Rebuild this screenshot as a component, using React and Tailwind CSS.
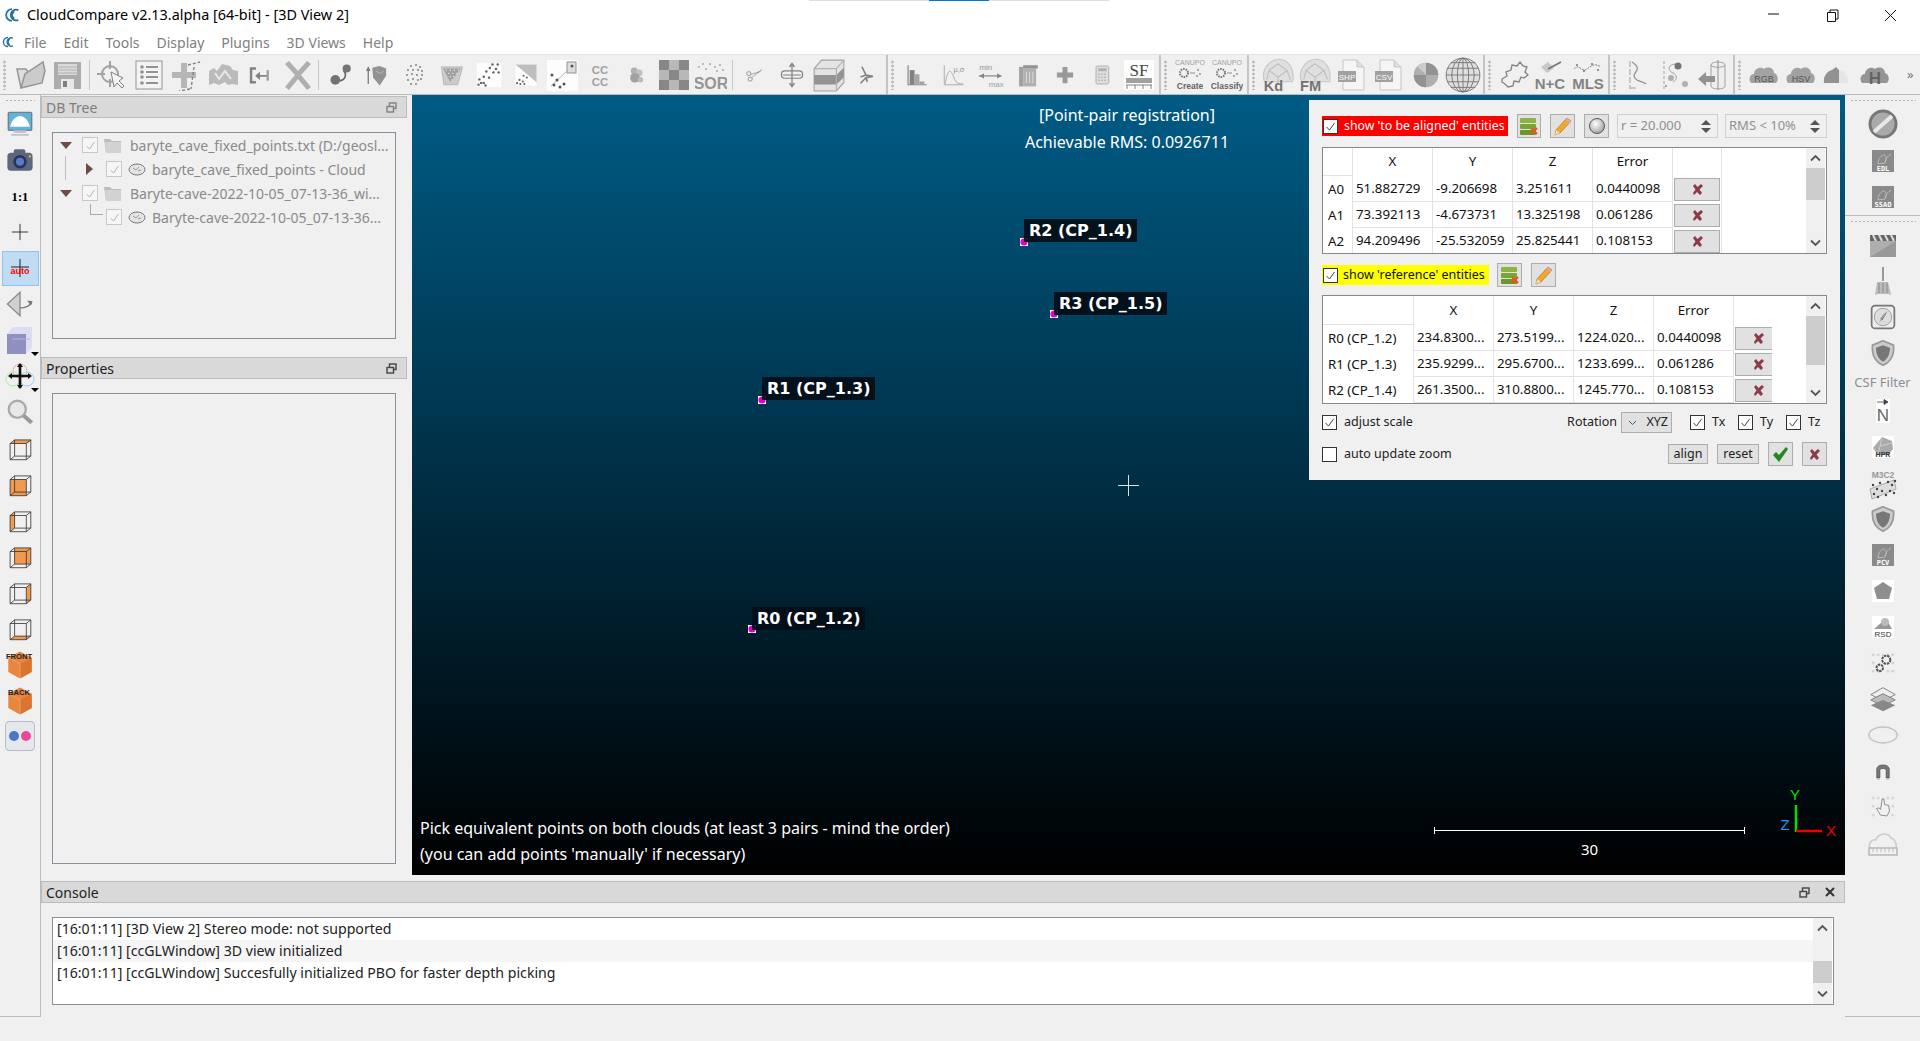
import React from 'react'

// small helpers for the icon drawings
const G = ({ children, s = 32, className = '' }) => (
  <svg width={s} height={s} viewBox="0 0 32 32" className={className}>{children}</svg>
)
const Dots = ({ pts, r = 1.2, fill = '#666' }) => pts.map((p, i) => <circle key={i} cx={p[0]} cy={p[1]} r={r} fill={fill} />)
const T = ({ x, y, size, fill = '#666', bold = false, family = 'Liberation Sans', children }) => (
  <text x={x} y={y} fontSize={size} fill={fill} fontFamily={family} fontWeight={bold ? 700 : 400} textAnchor="middle">{children}</text>
)
const Cloud = ({ fill = '#a0a0a0' }) => (
  <path d="M3 24c-3-4-1-9 3-9 0-5 6-8 10-5 4-3 10-1 10 4 4 1 5 7 2 10z" fill={fill} />
)

const CcLogo = ({ s }) => (
  <svg width={s} height={s} viewBox="0 0 20 20" fill="none" stroke="#24709f" strokeWidth="2">
    <path d="M10 3.500a6.500 6.500 0 1 0 0 13" />
    <path d="M17 4.500a6 6 0 1 0 0 11" />
    <path d="M12.500 6a4.500 4.500 0 0 0 0 8" />
  </svg>
)

const topGroup1 = [
  <G key="open"><path d="M6 29 2 10h9l2 3h11v3" fill="#dcdcdc" stroke="#8c8c8c" strokeWidth="1.5" /><path d="M6 29 10 15 28 3l2 9-3 12z" fill="#c8c8c8" stroke="#8c8c8c" strokeWidth="1.5" /></G>,
  <G key="save"><rect x="2" y="3" width="27" height="27" fill="#a5a5a5" /><rect x="6" y="5" width="19" height="11" fill="#d8d8d8" /><path d="M6 8h19M6 11h19M6 14h19" stroke="#aaa" /><rect x="9" y="20" width="13" height="10" fill="#e8e8e8" /><rect x="11" y="22" width="4" height="6" fill="#777" /></G>,
]
const topGroup2 = [
  <G key="pick"><circle cx="14" cy="15" r="8" fill="none" stroke="#9a9a9a" strokeWidth="2" /><path d="M14 2v8M14 20v8M1 15h8" stroke="#9a9a9a" strokeWidth="2" /><path d="m15 13 3 15 3-4 5 5 2-2-5-5 4-3z" fill="#f4f4f4" stroke="#777" /></G>,
  <G key="list"><rect x="3" y="2" width="26" height="28" fill="#f4f4f4" stroke="#8c8c8c" /><Dots pts={[[9, 8], [9, 13], [9, 18], [9, 24]]} r="1.8" fill="#888" /><path d="M13 8h12M13 13h12M13 18h12M13 24h12" stroke="#888" strokeWidth="2" /></G>,
  <G key="crop"><path d="M11 4h6v9h9v6h-9v10h-6V19H2v-6h9z" fill="#b0b0b0" /><path d="M18 6l12-3M24 8l-3 22M20 30l-11 2" fill="none" stroke="#777" strokeWidth="1.4" strokeDasharray="3 2" /></G>,
  <G key="sheep"><path d="M2 26V12l5-3 3 3 5-7 8 2 3 4 5 1v14l-6-1-4 1-3-3-6 3-5-2z" fill="#b5b5b5" /><path d="M8 14l4 6 6-8 6 8" stroke="#e6e6e6" strokeWidth="2" fill="none" /></G>,
  <G key="arrowin" s={26}><path d="M11 8H5v17h6" fill="none" stroke="#777" strokeWidth="3" /><path d="M11 16h5v-4l-6 5 6 5v-4h9v-2z" fill="#777" /><rect x="24" y="10" width="3" height="13" fill="#999" /></G>,
  <G key="x"><path d="m4 5 4-3 9 10 9-10 4 3-10 11 10 12-4 3-9-11-9 11-4-3 10-12z" fill="#a9a9a9" /></G>,
]
const topGroup3 = [
  <G key="s" s={26}><path d="M19 10c5 6 2 14-8 13" fill="none" stroke="#555" strokeWidth="2" /><circle cx="23" cy="8" r="5" fill="#666" /><circle cx="9" cy="22" r="6" fill="#666" /></G>,
  <G key="shield" s={26}><path d="M4 27V8M2 11l2-4 2 4" stroke="#666" fill="none" strokeWidth="1.5" /><path d="M9 7l9-2 8 3v9l-8 12-8-10z" fill="#888" /><path d="M13 11l6 3 4-3" stroke="#bbb" fill="none" /></G>,
  <G key="dotcircle"><Dots pts={[[12, 7], [17, 6], [21, 8], [9, 11], [14, 11], [19, 11], [23, 12], [8, 16], [13, 15], [18, 16], [23, 16], [9, 21], [14, 20], [19, 21], [22, 20], [12, 25], [17, 25]]} r="1" fill="#777" /></G>,
  <G key="tex" s={26}><path d="M3 6h26l-6 22H6z" fill="#c8c8c8" stroke="#aaa" /><path d="M5 8h22L14 25z" fill="#999" /><Dots pts={[[9, 10], [14, 10], [19, 10], [24, 10], [12, 14], [17, 14], [22, 14], [14, 18], [18, 18], [16, 22]]} r=".8" fill="#eee" /></G>,
  <G key="d1" s={28}><rect x="2" y="2" width="28" height="28" fill="#fff" /><Dots pts={[[20, 4], [26, 4], [17, 8], [24, 9], [13, 12], [21, 13], [27, 13], [10, 18], [5, 21], [16, 19], [4, 27], [10, 25], [12, 28], [7, 25]]} r="1.4" fill="#555" /></G>,
  <G key="d2" s={26}><rect x="3" y="3" width="26" height="26" fill="#fff" /><path d="M3 3h26v22z" fill="#b9b9b9" /><Dots pts={[[13, 17], [17, 19], [8, 22], [12, 24], [5, 26], [9, 27], [14, 27]]} r="1.3" fill="#555" /></G>,
  <G key="d3"><rect x="0" y="1" width="31" height="31" fill="#fff" /><rect x="20" y="3" width="9" height="11" fill="#ddd" stroke="#888" /><path d="M4 27 20 12" stroke="#aaa" /><Dots pts={[[5, 16], [10, 21], [7, 26], [13, 28], [17, 25], [25, 7]]} r="1.5" fill="#444" /></G>,
  <G key="cc" s={28}><T x="16" y="15" size="13" bold fill="#999">CC</T><T x="16" y="28" size="13" bold fill="#999">CC</T></G>,
  <G key="fig" s={22}><circle cx="12" cy="10" r="5" fill="#aaa" /><circle cx="19" cy="13" r="5" fill="#bbb" /><circle cx="13" cy="20" r="7" fill="#999" /><circle cx="21" cy="23" r="4" fill="#b5b5b5" /></G>,
  <svg key="check" width="30" height="30" viewBox="0 0 30 30">
    {[0, 1, 2].map((r) => [0, 1, 2].map((c) => (
      <rect key={`${r}${c}`} x={c * 10} y={r * 10} width="10" height="10" fill={(r + c) % 2 ? '#b2b2b2' : '#7c7c7c'} />
    )))}
  </svg>,
  <G key="sor"><Dots pts={[[4, 8], [11, 10], [15, 5], [20, 8], [25, 6], [28, 11], [8, 5], [22, 12]]} r=".9" fill="#999" /><T x="16" y="30" size="16" bold fill="#8c8c8c">SOR</T></G>,
]
const topGroup4 = [
  <G key="sc" s={22}><circle cx="7" cy="14" r="3" fill="none" stroke="#666" /><circle cx="9" cy="22" r="3" fill="none" stroke="#666" /><path d="M10 15 24 11M11 20 26 8" stroke="#777" /></G>,
  <G key="move" s={26}><path d="M16 2v28M5 16h22" fill="none" stroke="#777" strokeWidth="1.500" /><path d="M13 6l3-4 3 4M13 26l3 4 3-4" fill="none" stroke="#777" strokeWidth="2" /><rect x="3" y="11" width="26" height="9" rx="4" fill="none" stroke="#777" strokeWidth="1.500" /></G>,
  <svg key="slab" width="34" height="34" viewBox="0 0 32 32"><path d="M2 10 9 2h21v21l-7 8H2z" fill="#e2e2e2" stroke="#999" /><path d="M2 16h21l7-7v9l-7 7H2z" fill="#8a8a8a" /><path d="M2 10h21v21M23 10l7-8" fill="none" stroke="#aaa" /></svg>,
  <G key="st" s={22}><path d="M10 4l6 12 10 2-10 2-8 8 8-8 2 6M16 16l-8 3" fill="none" stroke="#777" strokeWidth="2.4" /></G>,
]
const topGroup5 = [
  <G key="hist" s={26}><path d="M5 4v24h23" stroke="#777" fill="none" strokeWidth="1.4" /><rect x="7" y="10" width="6" height="18" fill="#777" /><rect x="13" y="15" width="6" height="13" fill="#a0a0a0" /><rect x="19" y="24" width="6" height="4" fill="#999" /></G>,
  <G key="mu" s={26}><path d="M4 4v24h24" stroke="#999" fill="none" /><path d="M5 27C9 6 12 8 17 22c2 4 5 5 10 5" stroke="#999" fill="none" /><T x="22" y="12" size="9" fill="#888">μ,σ</T></G>,
  <G key="mm" s={28}><T x="10" y="10" size="9" fill="#888">min</T><T x="22" y="30" size="9" fill="#999">max</T><path d="M2 17h26" stroke="#888" strokeWidth="1.6" /><path d="M3 17l5-3v6z" fill="#777" /><path d="M28 17l-5-3v6z" fill="#777" /></G>,
  <G key="trash" s={26}><rect x="5" y="6" width="5" height="24" fill="#999" /><rect x="10" y="8" width="16" height="22" fill="#aaa" /><rect x="10" y="4" width="18" height="4" fill="#888" /><path d="M14 12v14M18 12v14M22 12v14" stroke="#e2e2e2" /></G>,
  <G key="plus" s={26}><path d="M13 6h6v7h7v6h-7v7h-6v-7H6v-6h7z" fill="#8f8f8f" /></G>,
  <G key="calc" s={24}><rect x="8" y="4" width="17" height="24" rx="2" fill="#ddd" stroke="#999" /><rect x="11" y="7" width="11" height="4" fill="#aaa" /><Dots pts={[[12, 15], [16, 15], [20, 15], [12, 19], [16, 19], [20, 19], [12, 23], [16, 23], [20, 23]]} r="1" fill="#999" /></G>,
  <G key="sf"><rect x="1" y="1" width="30" height="30" fill="#fff" /><T x="16" y="17" size="17" family="Liberation Serif" fill="#333">SF</T><rect x="3" y="19" width="26" height="5" fill="#999" /><path d="M3 26h26M4 26v4M12 26v4M20 26v4M28 26v4" stroke="#777" /></G>,
]
const canupo = (label, key) => (
  <G key={key}><T x="16" y="6" size="7" fill="#999">CANUPO</T><circle cx="10" cy="14" r="4" fill="none" stroke="#666" strokeDasharray="1.5 1" strokeWidth="2" /><path d="M16 14h5" stroke="#888" /><Dots pts={[[24, 11], [26, 15], [23, 17]]} r="1" fill="#888" /><T x="16" y="30" size="8.500" fill="#555" bold>{label}</T></G>
)
const topGroup6 = [canupo('Create', 'c1'), canupo('Classify', 'c2')]
const brain = (label, key) => (
  <svg key={key} width="36" height="36" viewBox="0 0 32 32"><path d="M4 22C0 10 10 2 17 2c8 0 14 8 12 20z" fill="#dedede" stroke="#c4c4c4" /><path d="M8 12l8-6 8 6-8 6zM8 12l-2 8M24 12l3 8M16 18v6" stroke="#bbb" fill="none" /><T x="12" y="30" size="13" bold fill="#666">{label}</T></svg>
)
const doc = (label, key) => (
  <G key={key}><path d="M7 1h14l7 7v23H7z" fill="#f6f6f6" stroke="#c2c2c2" /><path d="M21 1v7h7" fill="#ddd" stroke="#c2c2c2" /><rect x="2" y="12" width="18" height="11" fill="#999" /><T x="11" y="21" size="8" fill="#fff">{label}</T></G>
)
const topGroup7 = [
  brain('Kd', 'kd'), brain('FM', 'fm'), doc('SHP', 'shp'), doc('CSV', 'csv'),
  <G key="pie" s={28}><circle cx="16" cy="16" r="14" fill="#a8a8a8" /><path d="M16 16V2a14 14 0 0 1 14 14zM16 16v14A14 14 0 0 1 2 16z" fill="#888" /><path d="M16 16 6 6a14 14 0 0 1 10-4z" fill="#c8c8c8" /></G>,
  <svg key="globe" width="36" height="36" viewBox="0 0 32 32" fill="none" stroke="#666" strokeWidth=".8"><circle cx="16" cy="16" r="15" fill="#ddd" /><ellipse cx="16" cy="16" rx="10" ry="15" /><ellipse cx="16" cy="16" rx="5" ry="15" /><path d="M16 1v30M2 10h28M1 16h30M2 22h28M5 5h22M5 27h22" /></svg>,
]
const topGroup8 = [
  <G key="puz"><path d="M4 20l5-3-1-4 5-2 1-5 5 1 3-4 3 4 4 1-2 5 3 3-4 3-3-1-2 5-5-1-1 5-5 1-3-3-3-2z" fill="none" stroke="#777" strokeWidth="1.3" /></G>,
  <G key="nc"><path d="M6 8l7-5 6 6-7 5z" fill="#c4c4c4" /><path d="M13 10 26 3" stroke="#666" strokeWidth="1.6" /><T x="15" y="30" size="15" bold fill="#777">N+C</T></G>,
  <G key="mls"><path d="M2 10c5-6 8 4 13 0s8-6 14-2" stroke="#777" fill="none" strokeDasharray="2 1" /><Dots pts={[[5, 6], [12, 12], [20, 5], [26, 11]]} r="1" /><T x="16" y="30" size="15" bold fill="#777">MLS</T></G>,
]
const topGroup9 = [
  <G key="sc1"><path d="M7 2v28" stroke="#999" strokeDasharray="6 2" /><path d="M9 3c14 9-5 11 5 18 3 2 8 2 9 4" stroke="#888" fill="none" strokeWidth="1.3" /><path d="M7 29h6" stroke="#999" /></G>,
  <G key="sc2"><path d="M4 2v28" stroke="#999" strokeDasharray="3 2" /><path d="M15 5c-8 1-7 7-2 9 4 2 5 6 0 9" stroke="#999" fill="none" /><circle cx="18" cy="7" r="3.500" fill="#666" /><circle cx="11" cy="19" r="3" fill="#aaa" /><circle cx="25" cy="25" r="3" fill="#aaa" /><circle cx="6" cy="27" r="1" fill="#888" /></G>,
  <G key="cyl"><path d="M14 6v21c0 4 14 4 14 0V6c0-4-14-4-14 0zM14 6c0 3 14 3 14 0" fill="#eee" stroke="#999" /><path d="M21 1v30" stroke="#888" /><path d="M1 20l8-7v4h9v6H9v4z" fill="#888" /></G>,
]
const colorCloud = (label, key) => (
  <G key={key}><Cloud fill="#9a9a9a" /><T x="16" y="23" size="9" fill="#444">{label}</T></G>
)
const topGroup10 = [
  colorCloud('RGB', 'rgb'), colorCloud('HSV', 'hsv'),
  <G key="c3"><path d="M2 24C1 16 6 12 10 11l4-3 3 3v13z" fill="#888" /><path d="M17 11c6 1 9 6 9 13h-9z" fill="#e6e6e6" /></G>,
  <G key="c4"><Cloud fill="#8c8c8c" /><T x="16" y="25" size="17" bold fill="#555">H</T></G>,
]

const leftIcons = [
  <G key="screen"><rect x="3" y="3" width="26" height="20" rx="1" fill="#5fb3dc" stroke="#77808a" strokeWidth="1.5" /><path d="M5 19c2-9 8-12 11-12s9 3 11 12z" fill="#fff" /><path d="M9 23h14v3H9zM6 27h20v2H6z" fill="#c0c4c8" /></G>,
  <G key="cam"><rect x="2" y="8" width="28" height="20" rx="4" fill="#5c667c" /><rect x="9" y="4" width="13" height="6" rx="2" fill="#5c667c" /><circle cx="16" cy="18" r="7.500" fill="#2a3550" /><circle cx="16" cy="18" r="4.500" fill="#5a7ad0" /><circle cx="27" cy="12" r="1.2" fill="#f3c440" /></G>,
  <G key="ratio"><text x="16" y="22" fontSize="14" fontWeight="700" fontFamily="Liberation Serif" fill="#000" textAnchor="middle">1:1</text></G>,
  <G key="pivot"><path d="M16 7v18M7 16h18" stroke="#222" /></G>,
  <div key="auto" className="flex h-[35px] w-[37px] items-center justify-center border border-[#8fc4ee] bg-[#bfdcf3]">
    <G><path d="M16 7v18M7 15h18" stroke="#222" /><text x="16" y="22" fontSize="9" fontWeight="700" fontFamily="Liberation Sans" fill="#f00" textAnchor="middle">auto</text></G>
  </div>,
  <G key="persp"><path d="M16 3v26L2 16z" fill="#d0d0d0" stroke="#8c8c8c" strokeWidth="1.5" /><path d="M16 20c5 1 9-1 13-5" stroke="#777" fill="none" strokeWidth="1.5" /><path d="m24 12 6 1-2 5z" fill="#777" /></G>,
  <div key="cube" className="relative flex items-center justify-center">
    <G><path d="M3 10 9 3h19v21l-6 6H3z" fill="#dcdcf2" /><path d="M3 10h19v20H3z" fill="#8f8fc0" /><path d="M8 15h18" stroke="#b5b5d8" /></G>
    <span className="absolute bottom-[0px] right-[-3px] h-0 w-0 border-x-[4px] border-t-[4px] border-x-transparent border-t-black" />
  </div>,
  <div key="movecube" className="relative flex items-center justify-center">
    <G><circle cx="16" cy="11" r="7" fill="none" stroke="#f3a8a8" /><circle cx="9" cy="19" r="7" fill="none" stroke="#a8f0a8" /><circle cx="23" cy="19" r="7" fill="none" stroke="#a8c8f3" /><path d="M16 4v24M6 16h20" stroke="#111" strokeWidth="2.6" /><path d="m13 7 3-4 3 4M13 25l3 4 3-4M8 13l-4 3 4 3M24 13l4 3-4 3" fill="#111" /></G>
    <span className="absolute bottom-[0px] right-[-3px] h-0 w-0 border-x-[4px] border-t-[4px] border-x-transparent border-t-black" />
  </div>,
  <G key="mag"><circle cx="13" cy="13" r="9.500" fill="#e8e8e8" stroke="#aaa" strokeWidth="2.6" /><path d="m20 20 9 8" stroke="#999" strokeWidth="4.500" /></G>,
  ...[0, 1, 2, 3, 4, 5].map((f) => (
    <G key={f}>
      {f === 0 && <path d="M10 7h19l-5 4H6z" fill="#f09a50" />}
      {f === 1 && <path d="M5 11h18v18H5z" fill="#f09a50" />}
      {f === 2 && <path d="M5 11l5-4v18l-5 4z" fill="#f09a50" />}
      {f === 3 && <path d="M10 7h18v18H10z" fill="#f09a50" />}
      {f === 4 && <path d="M23 11l5-4v18l-5 4z" fill="#f09a50" />}
      {f === 5 && <path d="M5 29l5-4h18l-5 4z" fill="#f09a50" />}
      <path d="M5 11h18v18H5zM5 11l5-4h18v18l-5 4M23 11l5-4M10 7v18h18M10 25l-5 4" fill="none" stroke="#333" strokeWidth=".9" />
    </G>
  )),
  ...['FRONT', 'BACK'].map((label) => (
    <G key={label}><path d="M16 2 29 9v16l-13 7-13-7V9z" fill="#e8853e" /><path d="M16 16 29 9v16l-13 7z" fill="#d9752e" /><path d="M16 16v16M3 9l13 7" stroke="#f0a468" /><T x="15" y="11" size="8.500" bold fill="#222">{label}</T></G>
  )),
  <div key="anag" className="flex h-[30px] w-[30px] items-center justify-center gap-[2px] rounded-[4px] border border-[#b5bcc4] bg-[#e4e8ec]">
    <span className="h-[10px] w-[10px] rounded-full bg-[#4a78c8]" />
    <span className="h-[10px] w-[10px] rounded-full bg-[#e84a98]" />
  </div>,
]

const Stamp = ({ label, bg = '#8a8a8a' }) => (
  <svg width="22" height="22" viewBox="0 0 22 22"><rect width="22" height="22" fill={bg} /><path d="M6 14c0-6 4-9 6-9s3 4 1 8zM13 12c1-4 3-6 6-8" stroke="#bbb" fill="none" /><T x="11" y="21" size="7" fill="#fff" bold family="DejaVu Sans Mono">{label}</T></svg>
)
const Shield = () => (
  <G s={28}><path d="M16 2 28 7c1 11-3 19-12 23C7 26 3 18 4 7z" fill="#ccc" stroke="#999" strokeWidth="2" /><path d="M16 7 24 10c0 8-3 13-8 16-5-3-8-8-8-16z" fill="#777" /></G>
)
const rightTop = [
  <G key="no"><circle cx="16" cy="16" r="13" fill="#aaa" stroke="#777" strokeWidth="3" /><path d="M7 24 25 8" stroke="#e8e8e8" strokeWidth="4" /></G>,
  <Stamp key="edl" label="EDL" />,
  <Stamp key="ssao" label="SSAO" />,
]
const rightBottom = [
  <G key="clap"><path d="M3 6h26v6H3z" fill="#666" /><path d="M6 6l3 6M12 6l3 6M18 6l3 6M24 6l3 6" stroke="#ddd" strokeWidth="2" /><rect x="3" y="12" width="26" height="16" fill="#999" /><path d="M3 28V12h26z" fill="#bdbdbd" opacity=".6" /></G>,
  <G key="rake"><path d="M15 2h2v14h-2z" fill="#999" /><path d="M10 17h11l3 13-3-1H11l-3 1z" fill="#bbb" /><path d="M12 18v10M16 18v10M20 18v10" stroke="#888" /></G>,
  <G key="compass" s={28}><rect x="3" y="3" width="26" height="26" rx="4" fill="#eee" stroke="#777" strokeWidth="2" /><circle cx="16" cy="16" r="10" fill="#ddd" stroke="#999" /><path d="M21 9l-8 9 2 2z" fill="#555" /><path d="M11 23l8-9-2-2z" fill="#999" /></G>,
  <Shield key="sh1" />,
  <div key="csf" className="text-[13px] leading-[22px] text-[#8a8f96]">CSF Filter</div>,
  <svg key="n" width="14" height="24" viewBox="0 0 14 24"><rect width="14" height="24" fill="#fff" /><path d="M1 3h10M8 0.5 12 3 8 5.500z" stroke="#444" fill="#444" strokeWidth=".8" /><T x="7" y="22" size="17" fill="#666">N</T></svg>,
  <svg key="hpr" width="22" height="22" viewBox="0 0 22 22"><rect width="22" height="22" fill="#fff" /><path d="M10 1l10 4 1 8-5 6H6l-5-7z" fill="#aaa" /><path d="M10 1 8 10l12-3M8 10l-2 9" stroke="#ccc" fill="none" /><T x="11" y="21" size="7" bold fill="#333">HPR</T></svg>,
  <svg key="m3" width="30" height="34" viewBox="0 0 30 34" className="translate-y-[3px]"><T x="15" y="9" size="8.500" bold fill="#999">M3C2</T><path d="M2 20 26 11l2 9L4 30z" fill="#ddd" stroke="#aaa" /><Dots pts={[[5, 16], [9, 20], [6, 25], [12, 14], [14, 22], [10, 28], [20, 13], [24, 16], [22, 22], [18, 26], [26, 24], [27, 12]]} r="1.2" fill="#444" /></svg>,
  <Shield key="sh2" />,
  <Stamp key="pcv" label="PCV" />,
  <svg key="penta" width="22" height="22" viewBox="0 0 22 22"><rect width="22" height="22" fill="#fff" /><path d="M11 2l9 6-3 11H5L2 8z" fill="#8f8f8f" /></svg>,
  <svg key="rsd" width="22" height="22" viewBox="0 0 22 22"><rect width="22" height="22" fill="#fff" /><path d="M2 13 10 6l6 0 4 7z" fill="#999" /><circle cx="13" cy="6" r="4" fill="#bbb" /><T x="11" y="21" size="8" fill="#333">RSD</T></svg>,
  <G key="gears" s={26}><Dots pts={[[4, 6], [10, 6], [16, 6], [22, 6], [28, 6], [4, 16], [4, 26], [28, 26], [28, 16], [10, 26], [22, 26]]} r="1.8" fill="#d4d4d4" /><circle cx="20" cy="12" r="5" fill="none" stroke="#555" strokeWidth="2.500" strokeDasharray="3 1" /><circle cx="12" cy="22" r="4" fill="none" stroke="#555" strokeWidth="2.500" strokeDasharray="3 1" /></G>,
  <G key="layers" s={28}><path d="M16 3 30 11 16 18 2 11z" fill="#eee" stroke="#777" /><path d="M16 10 30 17l-14 7L2 17z" fill="#bbb" stroke="#777" /><path d="M16 17 30 23l-14 7-14-7z" fill="#888" /></G>,
  <G key="ell"><ellipse cx="16" cy="16" rx="14" ry="8" fill="none" stroke="#c4c4c4" strokeWidth="1.5" /><Dots pts={[[2, 16], [30, 16], [16, 8], [16, 24]]} r="1.3" fill="#ccc" /></G>,
  <G key="arch" s={20}><path d="M6 27V13c0-9 20-9 20 0v14h-5V15c0-4-10-4-10 0v12z" fill="#777" stroke="#444" /><path d="M6 29h5M21 29h5" stroke="#999" /></G>,
  <G key="hand" s={26}><Dots pts={[[4, 5], [10, 5], [22, 5], [28, 5], [4, 15], [28, 15], [4, 26], [28, 26]]} r="1.8" fill="#d8d8d8" /><path d="M13 26l-5-8 3-1 2 2 2-13 2 0 1 7 5 1 1 7-3 6z" fill="#f0f0f0" stroke="#777" /></G>,
  <G key="meas"><path d="M3 21c-2-5 2-9 6-8 2-7 12-8 15-2 4 1 6 6 5 10" fill="none" stroke="#ccc" strokeWidth="1.6" /><rect x="2" y="21" width="28" height="7" fill="none" stroke="#bbb" strokeWidth="1.6" /><path d="M6 21v4M10 21v4M14 21v4M18 21v4M22 21v4M26 21v4" stroke="#bbb" /></G>,
]

const Grip = ({ vertical = false, className = '' }) => (
  <span className={`${vertical ? 'h-[30px] w-[3px] bg-[radial-gradient(#b4b4b4_1px,transparent_1.2px)] bg-[length:3px_4px]' : 'h-[3px] w-[30px] bg-[radial-gradient(#b4b4b4_1px,transparent_1.2px)] bg-[length:4px_3px]'} ${className}`} />
)

const ToolGroup = ({ icons }) => icons.map((icon, i) => (
  <div key={i} className="flex h-[38px] w-[37px] shrink-0 items-center justify-center opacity-90">{icon}</div>
))
const InnerSep = () => <div className="mx-[3px] h-[30px] w-px shrink-0 bg-[#c8c8c8]" />
const Handle = ({ first = false }) => (
  <div className={`flex h-[40px] shrink-0 items-center ${first ? 'w-[12px] pl-[3px]' : 'ml-[2px] w-[12px] border-l-2 border-[#c4c4c4] pl-[3px]'}`}>
    <Grip vertical />
  </div>
)

const FloatIcon = ({ color = '#555' }) => (
  <svg width="11" height="11" viewBox="0 0 11 11" fill="none" stroke={color} strokeWidth="1.4">
    <rect x="3.500" y="1" width="6.500" height="5.500" />
    <rect x="1" y="4.500" width="6.500" height="5.500" fill="#d9d9d9" />
  </svg>
)
const DockHeader = ({ title, muted = false, close = false }) => (
  <div className={`flex h-[22px] items-center border border-[#bcbcbc] bg-[#d9d9d9] pl-[4px] pr-[9px] text-[14px] ${muted ? 'text-[#7d7d7d]' : 'text-[#222]'}`}>
    <span className="flex-1">{title}</span>
    <FloatIcon color={muted ? '#808080' : '#444'} />
    {close && <span className="ml-[15px] text-[0px]"><svg width="10" height="10" viewBox="0 0 10 10"><path d="m1 1 8 8M9 1 1 9" stroke="#333" strokeWidth="2" /></svg></span>}
  </div>
)

const Check = ({ on = true, muted = false, className = '' }) => (
  <span className={`flex h-[15px] w-[15px] shrink-0 items-center justify-center border ${muted ? 'border-[#c8c8c8] bg-[#f6f6f6]' : 'border-[#333] bg-white'} ${className}`}>
    {on && <svg width="11" height="11" viewBox="0 0 11 11"><path d="m1.500 6 3 3 5-7" fill="none" stroke={muted ? '#b5b5b5' : '#444'} strokeWidth="1" /></svg>}
  </span>
)

const Tri = ({ down = true }) => (
  down
    ? <span className="h-0 w-0 border-x-[6px] border-t-[7px] border-x-transparent border-t-[#6d4c48]" />
    : <span className="h-0 w-0 border-y-[6px] border-l-[7px] border-y-transparent border-l-[#6d4c48]" />
)
const Folder = () => (
  <svg width="18" height="16" viewBox="0 0 18 16"><path d="M0 2h6l2 2h9v12H2z" fill="#bdbdbd" /><path d="M1 5h16v11H2z" fill="#d2d2d2" /></svg>
)
const CloudMini = () => (
  <svg width="18" height="13" viewBox="0 0 18 13"><ellipse cx="9" cy="6.500" rx="8" ry="5.500" fill="#e4e4e4" stroke="#777" /><path d="M5 5l3 2 3-3M10 8l3-1" stroke="#999" fill="none" /></svg>
)

const treeRows = [
  { parent: true, open: true, label: 'baryte_cave_fixed_points.txt (D:/geosl...' },
  { parent: false, arrow: true, label: 'baryte_cave_fixed_points - Cloud' },
  { parent: true, open: true, label: 'Baryte-cave-2022-10-05_07-13-36_wi...' },
  { parent: false, branch: true, label: 'Baryte-cave-2022-10-05_07-13-36...' },
]

const TreeRow = ({ row }) => (
  <div className="relative flex h-[24px] items-center whitespace-nowrap text-[14px] text-[#8a8a8a]">
    {row.parent ? (
      <>
        <span className="ml-[7px] flex w-[22px]"><Tri /></span>
        <Check muted on className="!h-[16px] !w-[16px]" />
        <span className="ml-[6px] flex"><Folder /></span>
        <span className="ml-[8px]">{row.label}</span>
      </>
    ) : (
      <>
        <span className="ml-[33px] flex w-[20px]">{row.arrow && <Tri down={false} />}</span>
        <Check muted on className="!h-[16px] !w-[16px]" />
        <span className="ml-[6px] flex"><CloudMini /></span>
        <span className="ml-[6px]">{row.label}</span>
      </>
    )}
    {row.arrow && <span className="absolute left-[12px] top-[-1px] h-[24px] w-px bg-[#bbb]" />}
    {row.branch && <span className="absolute left-[37px] top-[-1px] h-[11px] w-[13px] border-b border-l border-[#aaa]" />}
  </div>
)

const Chevron = ({ up = false }) => (
  <svg width="11" height="8" viewBox="0 0 11 8" fill="none" stroke="#555" strokeWidth="1.8">
    <path d={up ? 'M1 6.500 5.500 2l4.500 4.500' : 'M1 1.500 5.500 6l4.500-4.500'} />
  </svg>
)

const XMark = () => (
  <svg width="13" height="13" viewBox="0 0 13 13"><path d="M2 3 4 1l2.500 3L10 1l2 2-3.500 3.500L11 10l-2 2-3-3-3 3-1-2 2.500-3.500z" fill="#8c3a48" /></svg>
)
const SmallBtn = ({ className = '', children }) => (
  <span className={`flex items-center justify-center border border-[#adadad] bg-[#e1e1e1] ${className}`}>{children}</span>
)

const PointTable = ({ headW, rows, thumbClass, tall = false }) => (
  <div className={`flex w-[505px] border border-[#85888f] bg-white text-[13.300px] text-[#111] ${tall ? 'h-[109px]' : 'h-[107px]'}`}>
    <div className="w-[449px] shrink-0 overflow-hidden">
      <div className={`flex items-center ${tall ? 'h-[29px]' : 'h-[28px]'}`}>
        <span className={`h-full shrink-0 border-b border-r border-[#e2e2e2] ${headW}`} />
        {['X', 'Y', 'Z', 'Error'].map((h) => (
          <span key={h} className="flex h-full w-[80px] shrink-0 items-center justify-center border-r border-[#e2e2e2]">{h}</span>
        ))}
        <span className="h-full w-[49px] shrink-0 border-r border-[#e2e2e2]" />
      </div>
      {rows.map((r) => (
        <div key={r[0]} className="flex h-[26px] items-center">
          <span className={`flex h-full shrink-0 items-center border-r border-[#e2e2e2] pl-[5px] pt-[2px] whitespace-nowrap ${headW}`}>{r[0]}</span>
          {r.slice(1).map((c, i) => (
            <span key={i} className="flex h-full w-[80px] shrink-0 items-center overflow-hidden border-b border-r border-[#e2e2e2] pl-[3px] pt-px whitespace-nowrap">{c}</span>
          ))}
          <span className="flex h-full w-[49px] shrink-0 items-start justify-center border-r border-[#e2e2e2] pt-[2px]">
            <SmallBtn className="h-[23px] w-[46px]"><XMark /></SmallBtn>
          </span>
        </div>
      ))}
    </div>
    <div className="ml-auto mr-[1px] flex w-[19px] flex-col bg-[#f0f0f0]">
      <span className="flex h-[20px] items-center justify-center"><Chevron up /></span>
      <div className="flex-1"><div className={`bg-[#cdcdcd] ${thumbClass}`} /></div>
      <span className="flex h-[20px] items-center justify-center"><Chevron /></span>
    </div>
  </div>
)

const Spin = ({ text, className = '' }) => (
  <span className={`flex h-[24px] items-center justify-between border border-[#cfcfcf] pl-[3px] pr-[6px] text-[13px] text-[#8f8f8f] ${className}`}>
    {text}
    <span className="flex flex-col gap-[3px]">
      <span className="h-0 w-0 border-x-[5px] border-b-[5px] border-x-transparent border-b-[#555]" />
      <span className="h-0 w-0 border-x-[5px] border-t-[5px] border-x-transparent border-t-[#555]" />
    </span>
  </span>
)
const RemoveAll = () => (
  <svg width="20" height="20" viewBox="0 0 20 20"><rect x="1" y="2" width="16" height="5" rx="1" fill="#8ab542" /><rect x="1" y="8" width="16" height="5" rx="1" fill="#7aa532" /><rect x="1" y="14" width="16" height="5" rx="1" fill="#6b962a" /><path d="m12 12 6 6M18 12l-6 6" stroke="#e8541e" strokeWidth="2.200" /></svg>
)
const Pencil = () => (
  <svg width="20" height="20" viewBox="0 0 20 20"><path d="M14 2l4 3-11 12-5 2 1-5z" fill="#f0a830" stroke="#b87a18" strokeWidth=".8" /><path d="M14 2l4 3-1.500 2-4-3z" fill="#e8a0b8" /><path d="M2 19l1-5 4 3z" fill="#f2dcb8" /></svg>
)

const alignedRows = [
  ['A0', '51.882729', '-9.206698', '3.251611', '0.0440098'],
  ['A1', '73.392113', '-4.673731', '13.325198', '0.061286'],
  ['A2', '94.209496', '-25.532059', '25.825441', '0.108153'],
]
const refRows = [
  ['R0 (CP_1.2)', '234.8300...', '273.5199...', '1224.020...', '0.0440098'],
  ['R1 (CP_1.3)', '235.9299...', '295.6700...', '1233.699...', '0.061286'],
  ['R2 (CP_1.4)', '261.3500...', '310.8800...', '1245.770...', '0.108153'],
]

const registrationLabels = [
  { text: 'R2 (CP_1.4)', box: 'left-[612px] top-[124px]', dot: 'left-[608px] top-[143px]' },
  { text: 'R3 (CP_1.5)', box: 'left-[642px] top-[197px]', dot: 'left-[638px] top-[215px]' },
  { text: 'R1 (CP_1.3)', box: 'left-[350px] top-[282px]', dot: 'left-[346px] top-[301px]' },
  { text: 'R0 (CP_1.2)', box: 'left-[340px] top-[512px]', dot: 'left-[336px] top-[530px]' },
]

const RegistrationPanel = () => (
  <div className="absolute left-[897px] top-[5px] h-[380px] w-[531px] bg-[#f0f0f0] px-[13px] pt-[14px] text-[12.500px] text-[#222]">
    <div className="flex h-[24px] items-center">
      <span className="flex h-[20px] w-[186px] shrink-0 items-center gap-[6px] bg-[#ff0000] pl-px text-[12.300px] text-white"><Check />show 'to be aligned' entities</span>
      <SmallBtn className="ml-[9px] h-[24px] w-[24px]"><RemoveAll /></SmallBtn>
      <SmallBtn className="ml-[9px] h-[24px] w-[25px]"><Pencil /></SmallBtn>
      <SmallBtn className="ml-[9px] h-[24px] w-[25px]"><span className="h-[16px] w-[16px] rounded-full border border-[#555] bg-[radial-gradient(circle_at_40%_35%,#ffffff,#8a8a8a)]" /></SmallBtn>
      <Spin text="r = 20.000" className="ml-[8px] w-[101px]" />
      <Spin text="RMS < 10%" className="ml-[7px] w-[102px]" />
    </div>
    <div className="mt-[9px]">
      <PointTable headW="w-[30px]" rows={alignedRows} thumbClass="h-[32px]" />
    </div>
    <div className="mt-[9px] flex h-[24px] items-center">
      <span className="flex h-[20px] w-[167px] shrink-0 items-center gap-[5px] bg-[#ffff00] pl-px text-[#111]"><Check />show 'reference' entities</span>
      <SmallBtn className="ml-[8px] h-[24px] w-[25px]"><RemoveAll /></SmallBtn>
      <SmallBtn className="ml-[9px] h-[24px] w-[25px]"><Pencil /></SmallBtn>
    </div>
    <div className="mt-[8px]">
      <PointTable headW="w-[91px]" rows={refRows} thumbClass="h-[49px]" tall />
    </div>
    <div className="mt-[8px] flex h-[21px] items-center whitespace-nowrap">
      <Check />
      <span className="ml-[7px]">adjust scale</span>
      <span className="flex-1" />
      <span>Rotation</span>
      <span className="ml-[4px] flex h-[21px] w-[51px] shrink-0 items-center justify-between border border-[#adadad] bg-[#e1e1e1] pl-[6px] pr-[3px]">
        <svg width="9" height="6" viewBox="0 0 9 6" fill="none" stroke="#555"><path d="m1 1 3.500 3.500L8 1" /></svg>
        XYZ
      </span>
      <Check className="ml-[18px]" />
      <span className="w-[33px] shrink-0 pl-[7px]">Tx</span>
      <Check />
      <span className="w-[33px] shrink-0 pl-[7px]">Ty</span>
      <Check />
      <span className="w-[26px] shrink-0 pl-[7px]">Tz</span>
    </div>
    <div className="mt-[9px] flex h-[24px] items-center">
      <Check on={false} />
      <span className="ml-[7px]">auto update zoom</span>
      <span className="flex-1" />
      <SmallBtn className="h-[20px] w-[40px]">align</SmallBtn>
      <SmallBtn className="ml-[9px] h-[20px] w-[42px]">reset</SmallBtn>
      <SmallBtn className="ml-[9px] h-[24px] w-[25px]">
        <svg width="17" height="15" viewBox="0 0 17 15"><path d="M1 8l3-3 3 3 7-8 2 2-9 13z" fill="#1f8a1f" /></svg>
      </SmallBtn>
      <SmallBtn className="ml-[9px] h-[24px] w-[25px]"><XMark /></SmallBtn>
    </div>
  </div>
)

const GlView = () => (
  <div className="relative h-[780px] w-[1433px] shrink-0 overflow-hidden bg-[linear-gradient(to_bottom,#005b85,#000000)] text-white">
    <div className="absolute left-[715px] top-[7px] flex -translate-x-1/2 flex-col items-center whitespace-nowrap text-[16px] leading-[27px]">
      <span>[Point-pair registration]</span>
      <span>Achievable RMS: 0.0926711</span>
    </div>

    {registrationLabels.map((l) => (
      <React.Fragment key={l.text}>
        <svg width="8" height="8" viewBox="0 0 8 8" className={`absolute ${l.dot}`}>
          <rect width="8" height="8" fill="#fff" />
          <circle cx="4" cy="4" r="3.600" fill="#e000d0" />
        </svg>
        <div className={`absolute flex h-[23px] w-[113px] items-center bg-[#020d16e8] pl-[5px] font-['DejaVu_Sans',sans-serif] text-[16px] font-bold whitespace-nowrap ${l.box}`}>
          {l.text}
        </div>
      </React.Fragment>
    ))}

    <svg width="21" height="21" viewBox="0 0 21 21" className="absolute left-[706px] top-[380px]">
      <path d="M10.500 0v21M0 10.500h21" stroke="#d8e2e8" />
    </svg>

    <RegistrationPanel />

    <div className="absolute left-[8px] top-[720px] whitespace-nowrap text-[16px] leading-[26px]">
      <div>Pick equivalent points on both clouds (at least 3 pairs - mind the order)</div>
      <div>(you can add points 'manually' if necessary)</div>
    </div>

    <div className="absolute left-[1022px] top-[732px] flex w-[311px] flex-col items-center">
      <div className="flex h-[7px] w-full items-center border-x border-white">
        <span className="h-px w-full bg-white" />
      </div>
      <span className="mt-[5px] text-[15px] leading-[20px]">30</span>
    </div>

    <svg width="70" height="60" viewBox="0 0 70 60" className="absolute left-[1360px] top-[690px]">
      <path d="M24 20v27" stroke="#00e000" strokeWidth="2.500" />
      <path d="M24 46h26" stroke="#f00000" strokeWidth="2.500" />
      <text x="23" y="15" fontSize="15" fill="#00e000" fontFamily="Liberation Sans" textAnchor="middle">Y</text>
      <text x="59" y="51" fontSize="15" fill="#f00000" fontFamily="Liberation Sans" textAnchor="middle">X</text>
      <text x="13" y="45" fontSize="15" fill="#1a9cf0" fontFamily="Liberation Sans" textAnchor="middle">Z</text>
    </svg>
  </div>
)

const consoleLines = [
  '[16:01:11] [3D View 2] Stereo mode: not supported',
  '[16:01:11] [ccGLWindow] 3D view initialized',
  '[16:01:11] [ccGLWindow] Succesfully initialized PBO for faster depth picking',
]

export default function App() {
  return (
    <div className="relative flex h-[1041px] w-[1920px] flex-col overflow-hidden bg-[#f0f0f0] font-['Noto_Sans',sans-serif] text-[#222]">
      <div className="absolute left-[809px] top-0 flex h-px w-[300px] bg-[#e0e0e0]">
        <span className="ml-[120px] w-[60px] bg-[#0078d7]" />
      </div>

      {/* title bar */}
      <div className="flex h-[30px] shrink-0 items-center bg-white pl-[3px]">
        <CcLogo s={18} />
        <span className="ml-[6px] text-[14.400px] text-black">CloudCompare v2.13.alpha [64-bit] - [3D View 2]</span>
        <div className="ml-auto flex">
          {[
            <path key="m" d="M6 10h11" stroke="#111" />,
            <path key="r" d="M6.500 8.500h8v9h-8zM9 8.500V6h8v9h-2.500" stroke="#111" fill="none" />,
            <path key="c" d="m6 6 11 11M17 6 6 17" stroke="#111" />,
          ].map((p, i) => (
            <span key={i} className="flex w-[58.500px] justify-center"><svg width="23" height="23" viewBox="0 0 23 23">{p}</svg></span>
          ))}
        </div>
      </div>

      {/* menu bar */}
      <div className="flex h-[25px] shrink-0 items-center border-b border-[#e4e4e4] bg-white pl-px text-[14px] text-[#808080]">
        <CcLogo s={14} />
        <div className="ml-[9px] flex gap-[17px]">
          {['File', 'Edit', 'Tools', 'Display', 'Plugins', '3D Views', 'Help'].map((m) => <span key={m}>{m}</span>)}
        </div>
      </div>

      {/* main toolbar */}
      <div className="flex h-[40px] shrink-0 items-center overflow-hidden border-b border-[#bcbcbc]">
        <Handle first />
        <ToolGroup icons={topGroup1} />
        <InnerSep />
        <ToolGroup icons={topGroup2} />
        <InnerSep />
        <ToolGroup icons={topGroup3} />
        <InnerSep />
        <ToolGroup icons={topGroup4} />
        <Handle />
        <ToolGroup icons={topGroup5} />
        <Handle />
        <ToolGroup icons={topGroup6} />
        <Handle />
        <ToolGroup icons={topGroup7} />
        <Handle />
        <ToolGroup icons={topGroup8} />
        <Handle />
        <ToolGroup icons={topGroup9} />
        <Handle />
        <ToolGroup icons={topGroup10} />
        <span className="ml-[14px] text-[13px] text-[#777]">»</span>
      </div>

      <div className="flex h-[922px] shrink-0">
        {/* left toolbar */}
        <div className="flex w-[41px] shrink-0 flex-col items-center border-b border-r border-[#bcbcbc]">
          <div className="flex h-[11px] shrink-0 items-center"><Grip /></div>
          {leftIcons.map((icon, i) => (
            <div key={i} className="flex h-[36px] w-full shrink-0 items-center justify-center [&>svg]:scale-90">{icon}</div>
          ))}
        </div>

        {/* center column */}
        <div className="flex w-[1804px] shrink-0 flex-col">
          <div className="flex h-[780px] shrink-0">
            <div className="flex w-[366px] shrink-0 flex-col pt-px">
              <DockHeader title="DB Tree" muted />
              <div className="mx-[11px] mt-[14px] h-[207px] border border-[#8a8f9c]">
                {treeRows.map((row) => <TreeRow key={row.label} row={row} />)}
              </div>
              <div className="mt-[18px]">
                <DockHeader title="Properties" />
              </div>
              <div className="mx-[11px] mt-[14px] h-[471px] border border-[#8a8f9c]" />
            </div>
            <div className="w-[5px] shrink-0" />
            <GlView />
          </div>
          <div className="mt-[6px]">
            <DockHeader title="Console" close />
          </div>
          <div className="ml-[11px] mt-[14px] flex h-[88px] w-[1782px] border border-[#8a8f9c] bg-white text-[14.150px] text-[#222]">
            <div className="flex-1">
              {consoleLines.map((line, i) => (
                <div key={line} className={`flex h-[22px] items-center pl-[4px] ${i === 1 ? 'bg-[#f5f5f5]' : ''}`}>{line}</div>
              ))}
            </div>
            <div className="mr-px flex w-[19px] flex-col bg-[#f0f0f0]">
              <span className="flex h-[20px] items-center justify-center"><Chevron up /></span>
              <div className="flex-1 pt-[23px]"><div className="h-[22px] bg-[#cdcdcd]" /></div>
              <span className="flex h-[20px] items-center justify-center"><Chevron /></span>
            </div>
          </div>
        </div>

        {/* right toolbar */}
        <div className="flex w-[75px] shrink-0 flex-col items-center border-b border-[#bcbcbc]">
          <div className="flex h-[10px] shrink-0 items-center"><Grip className="!w-[66px]" /></div>
          <div className="flex h-[38px] w-full items-center justify-center">{rightTop[0]}</div>
          <div className="flex h-[36px] w-full items-center justify-center">{rightTop[1]}</div>
          <div className="flex h-[36px] w-full items-center justify-center">{rightTop[2]}</div>
          <div className="h-px w-full shrink-0 bg-[#bcbcbc]" />
          <div className="flex h-[11px] shrink-0 items-center"><Grip className="!w-[66px]" /></div>
          {rightBottom.map((icon, i) => (
            <div key={i} className={`flex w-full shrink-0 items-center justify-center ${i === 4 ? 'h-[22px]' : 'h-[36px]'}`}>{icon}</div>
          ))}
        </div>
      </div>
    </div>
  )
}
